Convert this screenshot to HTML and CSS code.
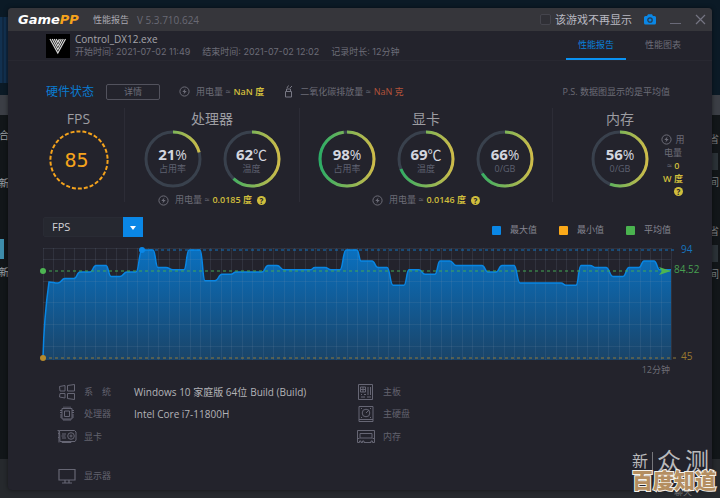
FILE: index.html
```
<!DOCTYPE html>
<html lang="zh-CN">
<head>
    <meta charset="UTF-8">
    <meta name="viewport" content="width=device-width, initial-scale=1.0">
    <title>GamePP 性能报告</title>
    <link rel="stylesheet" href="styles.css">
</head>
<body>
    <!-- shared icons and gradients -->
    <svg class="defs" width="0" height="0" aria-hidden="true">
        <linearGradient id="ring" gradientUnits="userSpaceOnUse" x1="0" y1="0" x2="58" y2="0">
            <stop offset="0" stop-color="#26ad66"/>
            <stop offset="1" stop-color="#d3bc48"/>
        </linearGradient>
        <symbol id="bolt" viewBox="0 0 11 11">
            <circle cx="5.500" cy="5.500" r="4.600" fill="none" stroke="currentColor"/>
            <path d="M6.500 2.500 3.300 6h1.900L4.500 8.600 7.700 5H5.800z" fill="currentColor"/>
        </symbol>
    </svg>

    <div class="desktop" aria-hidden="true">
        <span class="scrap s1">合</span>
        <span class="scrap s2">新</span>
        <span class="scrap s3">新</span>
        <i class="tile"></i>
        <span class="scrap r1">省</span>
        <i class="tile t1"></i>
        <span class="scrap r2">间</span>
        <span class="scrap r3">省</span>
        <i class="tile t2"></i>
        <span class="scrap r4">间</span>
        <span class="chat">聊天</span>
    </div>

    <div class="window">
        <div class="titlebar">
            <span class="logo">Game<b>PP</b></span>
            <span class="name">性能报告</span>
            <span class="version">V 5.3.710.624</span>
            <label class="hide"><input type="checkbox">该游戏不再显示</label>
            <button class="camera" aria-label="截图">
                <svg width="12" height="11" viewBox="0 0 12 11"><path d="M1.500 2H3L4 .3h4L9 2h1.500Q12 2 12 3.500v5.500q0 1.500-1.500 1.500h-9Q0 10.500 0 9V3.500Q0 2 1.500 2z" fill="#0a87e6"/><circle cx="6" cy="6" r="2.200" fill="none" stroke="#253c52" stroke-width="1.300"/></svg>
            </button>
            <button aria-label="最小化"><svg width="11" height="11"><path d="M0 9.500h11" stroke="#6a6a78"/></svg></button>
            <button aria-label="关闭"><svg width="11" height="11"><path d="M1 1l9 9M10 1l-9 9" stroke="#747482" stroke-width="1.200"/></svg></button>
        </div>

        <div class="game">
            <svg class="game-icon" width="24" height="24" viewBox="0 0 24 24">
                <rect width="24" height="24" fill="#000"/>
                <g fill="none" stroke="#d8d8d8" stroke-width="1.200">
                    <path d="M4 5l7.800 14L19.500 5"/>
                    <path d="M6.200 5l5.600 10.500L17.300 5"/>
                    <path d="M8.200 5l3.600 7L15.300 5"/>
                    <path d="M10.200 5l1.600 3.300L13.400 5"/>
                </g>
            </svg>
            <div class="game-info">
                <h1>Control_DX12.exe</h1>
                <p><span>开始时间: 2021-07-02 11:49</span><span>结束时间: 2021-07-02 12:02</span><span>记录时长: 12分钟</span></p>
            </div>
            <nav>
                <a href="#report" class="active">性能报告</a>
                <a href="#charts">性能图表</a>
            </nav>
        </div>

        <div class="status">
            <h2>硬件状态</h2>
            <button class="detail">详情</button>
            <p class="usage"><svg class="bolt"><use href="#bolt"/></svg>用电量 ≈ <b>NaN 度</b></p>
            <p class="carbon"><svg width="9" height="13" viewBox="0 0 9 13" fill="none" stroke="#777783"><path d="M1.500 6.500h6v5.500h-6zM2.500 6.500V4h4v2.500M3 3l1.500-2.500M6 3l2-2"/></svg>二氧化碳排放量 ≈ <b>NaN 克</b></p>
            <p class="ps">P.S. 数据图显示的是平均值</p>
        </div>

        <div class="panels">
            <section>
                <h3>FPS</h3>
                <div class="gauges">
                    <div class="gauge fps">
                        <svg viewBox="0 0 60 60"><circle cx="30" cy="30" r="28.600"/></svg>
                        <strong>85</strong>
                    </div>
                </div>
            </section>
            <section>
                <h3>处理器</h3>
                <div class="gauges">
                    <div class="gauge" data-value="21"><strong>21<small>%</small></strong><span>占用率</span></div>
                    <div class="gauge" data-value="62"><strong>62<small>℃</small></strong><span>温度</span></div>
                </div>
                <p class="usage"><svg class="bolt"><use href="#bolt"/></svg>用电量 ≈ <b>0.0185 度</b><i class="help">?</i></p>
            </section>
            <section>
                <h3>显卡</h3>
                <div class="gauges">
                    <div class="gauge" data-value="98"><strong>98<small>%</small></strong><span>占用率</span></div>
                    <div class="gauge" data-value="69"><strong>69<small>℃</small></strong><span>温度</span></div>
                    <div class="gauge" data-value="66"><strong>66<small>%</small></strong><span>0/GB</span></div>
                </div>
                <p class="usage"><svg class="bolt"><use href="#bolt"/></svg>用电量 ≈ <b>0.0146 度</b><i class="help">?</i></p>
            </section>
            <section>
                <h3>内存</h3>
                <div class="gauges memory">
                    <div class="gauge" data-value="56"><strong>56<small>%</small></strong><span>0/GB</span></div>
                    <p class="side"><svg class="bolt"><use href="#bolt"/></svg>用<br>电量<br>≈ <b>0<br>W 度</b><br><i class="help">?</i></p>
                </div>
            </section>
        </div>

        <div class="chart-bar">
            <div class="picker">
                <select aria-label="图表数据"><option>FPS</option></select>
            </div>
            <ul class="legend">
                <li class="max">最大值</li>
                <li class="min">最小值</li>
                <li class="avg">平均值</li>
            </ul>
        </div>

        <svg class="chart" viewBox="0 0 704 132">
            <defs>
                <linearGradient id="fill" x1="0" y1="0" x2="0" y2="1">
                    <stop offset="0" stop-color="#0a70bf"/>
                    <stop offset="1" stop-color="#1a4468"/>
                </linearGradient>
            </defs>
            <g transform="translate(35 4)">
                <path id="area" fill="url(#fill)"/>
                <path id="grid" fill="none" stroke="#8d9ab5" stroke-opacity=".13"/>
                <path d="M100 2H634" stroke="#0a87e6" stroke-dasharray="3 3" opacity=".8"/>
                <path id="line" fill="none" stroke="#0886e4" stroke-width="1.500"/>
                <path d="M0 23H628" stroke="#43a953" stroke-dasharray="3 3"/>
                <path d="M0 110H634" stroke="#8f7b3c" stroke-dasharray="3 3"/>
                <circle cx="99" cy="2" r="3" fill="#0a87e6"/>
                <circle cx="0" cy="23" r="3" fill="#4db552"/>
                <circle cx="0" cy="110" r="3" fill="#b48a2c"/>
                <path d="M616 19l12 4-12 4 3-4z" fill="#4db552"/>
                <text x="638" y="5" fill="#1673bd">94</text>
                <text x="631" y="25" fill="#479f50">84.52</text>
                <text x="638" y="112" fill="#9a792f">45</text>
                <text class="end" x="627" y="125" fill="#6d6d76" text-anchor="end">12分钟</text>
            </g>
        </svg>

        <dl class="specs">
            <div>
                <svg viewBox="0 0 20 16"><path d="M2.500 2.500 8 1.500V7H3zM10.500 1.500l7-1V7h-7zM3 9.500h5v4.500l-5.500-1zM10.500 9.500h7v6l-7-1z"/></svg>
                <dt>系&emsp;统</dt><dd><span>Windows 10 家庭版 64位</span><span>Build (Build)</span></dd>
            </div>
            <div>
                <svg viewBox="0 0 20 16"><path d="M5 2.500h10v10.500H5zM7.500 5h5v5.500h-5zM7 .5v2M9 .5v2M11 .5v2M13 .5v2M7 13v2M9 13v2M11 13v2M13 13v2M3 4.500h2M3 6.500h2M3 9h2M3 11h2M15 4.500h2M15 6.500h2M15 9h2M15 11h2"/></svg>
                <dt>处理器</dt><dd>Intel Core i7-11800H</dd>
            </div>
            <div>
                <svg viewBox="0 0 20 16"><path d="M.5 1.500H2v12M1 4.500h1M1 8.500h1M2.500 1.500h15l1.500 1.500v8l-1 1.500H3zM5 5h4M4.500 7h4M5 9h4M5 12.500v1h9v-1"/><circle cx="14" cy="7" r="3.300"/><circle cx="14" cy="7" r="1"/></svg>
                <dt>显卡</dt><dd></dd>
            </div>
            <div class="display">
                <svg viewBox="0 0 20 16"><path d="M2 1.500h16v10.500H2zM8 12.500v2M12 12.500v2M5 15h10" stroke-width="1.200"/></svg>
                <dt>显示器</dt><dd></dd>
            </div>
            <div>
                <svg viewBox="0 0 20 16"><path d="M2.500.5h14v15h-14zM4.500 3h5v5h-5zM7 3v5M4.500 5.500h5M12 3v8M14.500 3v8M5 10.500h1M8 10.500h2M5 13h4M11 13h4"/></svg>
                <dt>主板</dt><dd></dd>
            </div>
            <div>
                <svg viewBox="0 0 20 16"><path d="M3 .5h14v15H3zM3 13.500h14M10 7l3-3M5 2.500h1M14 2.500h1M5 11.500h1M14 11.500h1"/><circle cx="10" cy="7" r="3.800"/></svg>
                <dt>主硬盘</dt><dd></dd>
            </div>
            <div>
                <svg viewBox="0 0 20 16"><path d="M1.500 1.500h17v12h-2V12h-1.500v1.500H8V12H6.500v1.500H5V12H3.500v1.500h-2zM4 4.500h12v4.500H4zM1.500 9.500h2M16.500 9.500h2"/></svg>
                <dt>内存</dt><dd></dd>
            </div>
        </dl>
    </div>

    <div class="watermark" aria-hidden="true">
        <div class="crowd"><span>新</span><em>众</em><em>测</em></div>
        <div class="zhidao">百度知道</div>
    </div>

    <script>
        // rings: pathLength 100, so the value is the dash length
        document.querySelectorAll('.gauge[data-value]').forEach(el => {
            el.insertAdjacentHTML('afterbegin',
                '<svg viewBox="0 0 58 58"><circle class="track" cx="29" cy="29" r="27"/>' +
                '<path class="value" pathLength="100" stroke-dasharray="' + el.dataset.value + ' 100" ' +
                'd="M29 2a27 27 0 0 1 0 54a27 27 0 0 1 0-54"/></svg>');
        });

        // [x, fps]
        const data = [[0,45],[6,79.5],[15,79],[22,81],[31,81],[37,84],[47,84],[53,87],[63,87],[68,82],[77,82],
            [84,84],[93,84],[99,94],[110,94],[115,86],[123,86],[130,85],[141,85],[146,94],[157,94],[162,80],[172,80],
            [179,83],[188,83],[193,84],[219,84],[225,87],[234,87],[241,85],[267,85],[272,86],[282,86],[288,85],
            [297,85],[303,94],[314,94],[318,89],[329,89],[335,86],[344,86],[350,78],[361,78],[366,85],[376,85],
            [382,83],[392,83],[397,89],[407,89],[413,87],[439,87],[445,84],[453,84],[459,87],[471,87],[477,79],
            [518,79],[523,78],[533,78],[538,87],[547,87],[553,86],[563,86],[570,82],[580,82],[586,86],[596,86],
            [601,89],[611,89],[617,85],[628,85]];
        const y = fps => 2 + (94 - fps) * 2.2;

        let d = 'M0 ' + y(45);
        for (let i = 1; i < data.length; i++) {
            const [x0, v0] = data[i - 1], [x1, v1] = data[i];
            const mid = (x0 + x1) / 2;
            d += i === 1 ? `Q1 70 ${x1} ${y(v1)}` : `C${mid} ${y(v0)} ${mid} ${y(v1)} ${x1} ${y(v1)}`;
        }
        document.getElementById('line').setAttribute('d', d);
        document.getElementById('area').setAttribute('d', d + 'V112H0z');

        let grid = '';
        for (let i = 0; i <= 60; i++) grid += `M${Math.round(i * 628 / 60) + .5} 0V112`;
        [0, 11, 33, 54, 76, 98].forEach(v => grid += `M0 ${v + .5}H628`);
        document.getElementById('grid').setAttribute('d', grid);
    </script>
</body>
</html>
```
FILE: styles.css
```
* { box-sizing: border-box; }
body { margin: 0; padding: 8px; min-height: 100vh; background: #26292d; font: 9px/12px "Open Sans", "Noto Sans CJK SC", sans-serif; color: #6c6c77; overflow: hidden; }
h1, h2, h3, p, ul, dl, dd { margin: 0; padding: 0; font-weight: normal; }
button { border: 0; padding: 0; background: none; font: inherit; color: inherit; display: flex; align-items: center; justify-content: center; }
a { color: inherit; text-decoration: none; }
b { font-weight: 600; }
.defs { position: absolute; }

/* what shows round the window */
.desktop { position: absolute; inset: 0; z-index: -1; overflow: hidden; background: linear-gradient(#0b1a26 95px, #3b3e45 95px, #3b3e45 115px, #121619 115px, #121619 459px, #26292d 459px); }
.desktop::before { content: ""; position: absolute; left: 0; top: 17px; width: 8px; height: 66px; background: repeating-linear-gradient(90deg, #123150 0 2px, #0f2740 2px 4px); }
.scrap { position: absolute; font-size: 10px; color: #a0a4a8; }
.s1 { left: -1px; top: 129px; }
.s2 { left: -1px; top: 177px; }
.s3 { left: -1px; top: 266px; }
.r1, .r2, .r3, .r4 { right: 1px; color: #7b7f82; }
.r1 { top: 133px; }
.r2 { top: 176px; }
.r3 { top: 225px; }
.r4 { top: 268px; }
.tile { position: absolute; left: 0; top: 239px; width: 4px; height: 20px; background: #3d8dab; }
.t1, .t2 { left: auto; right: 2px; width: 6px; height: 17px; background: #2b3237; }
.t1 { top: 153px; }
.t2 { top: 245px; }
.chat { position: absolute; right: 28px; bottom: 0; color: #777; }

.window { background: #23232c; border-radius: 4px; overflow: hidden; box-shadow: 0 0 4px rgba(0, 0, 0, .5); padding-bottom: 3px; }

.titlebar { display: flex; align-items: center; height: 23px; padding: 0 6px 0 10px; background: #36363b; }
.logo { font: italic bold 13px/23px "DejaVu Sans", sans-serif; color: #fff; margin-right: 14px; }
.logo b { color: #f5a31c; font-weight: bold; }
.name { color: #a9a9b0; margin-right: 8px; }
.version { color: #696974; font-size: 10px; }
.hide { display: flex; align-items: center; gap: 4px; margin-left: auto; font-size: 11px; color: #b9b9c2; }
.hide input { appearance: none; width: 11px; height: 11px; margin: 0; border: 1px solid #45454d; border-radius: 2px; background: #303036; }
.titlebar button { margin-left: 14px; }
.titlebar .camera { margin-left: 12px; }

.game { display: flex; align-items: center; height: 30px; padding: 0 19px 0 38px; border-bottom: 1px solid #282831; }
.game-info { margin-left: 5px; }
.game-info h1 { font-size: 10px; line-height: 12px; color: #a5a5ab; }
.game-info p { display: flex; gap: 12px; font-family: Inter, "Noto Sans CJK SC", sans-serif; line-height: 13px; }
nav { display: flex; gap: 7px; margin-left: auto; align-self: stretch; }
nav a { width: 60px; text-align: center; line-height: 28px; border-bottom: 2px solid transparent; }
nav .active { color: #0a80d8; border-color: #0a92f2; }

.status { display: flex; align-items: center; height: 47px; padding: 14px 42px 0 38px; }
.status h2 { font-size: 12px; color: #0a7bd0; }
.detail { width: 54px; height: 16px; margin: 0 19px 0 12px; border: 1px solid #52525d; border-radius: 2px; }
.usage, .carbon { display: flex; align-items: center; gap: 3px; }
.bolt { width: 11px; height: 11px; margin-right: 3px; }
.usage b, .side b { color: #d0be3c; }
.carbon { margin-left: 20px; }
.carbon svg { margin-right: 4px; }
.carbon b { color: #b4533a; font-weight: normal; }
.ps { margin-left: auto; }
.help { display: inline-block; width: 9px; height: 9px; margin-left: 2px; border-radius: 50%; background: #d0be3c; color: #23232c; font: bold 8px/9px "Open Sans", sans-serif; text-align: center; }

.panels { display: grid; grid-template-columns: 92fr 175fr 253fr 134fr; padding: 0 25px; }
.panels section { height: 94px; border-right: 1px solid #2c2c36; display: flex; flex-direction: column; align-items: center; }
.panels section:last-child { border-right: 0; }
.panels h3 { font-size: 14px; line-height: 22px; color: #9d9da2; }
.gauges { display: flex; justify-content: center; gap: 21px; }
.gauge { position: relative; width: 58px; height: 58px; display: flex; flex-direction: column; align-items: center; padding-top: 16px; }
.gauge svg { position: absolute; inset: 0; }
.gauge circle, .gauge path { fill: none; stroke-width: 3; }
.gauge .track { stroke: #39414d; }
.gauge .value { stroke: url(#ring); }
.gauge strong { font-size: 15px; line-height: 16px; color: #d3d6df; }
.gauge small { font-size: 14px; font-weight: normal; }
.gauge span { color: #5e6170; }
.fps { width: 60px; height: 60px; }
.fps circle { stroke: #f5a31c; stroke-width: 2; stroke-dasharray: 4 2; }
.fps strong { font: 20px/28px "DejaVu Sans Mono", monospace; color: #f5a31c; margin-right: 4px; }
.panels .usage { margin-top: 6px; }
.memory { display: grid; grid-template-columns: 1fr 58px 1fr; gap: 0; width: 100%; }
.memory .gauge { grid-column: 2; }
.side { width: 26px; margin: 3px 0 0 11px; line-height: 13px; text-align: center; white-space: nowrap; }
.side .bolt { vertical-align: -2px; }
.side .help { margin-left: 11px; }

.chart-bar { display: flex; justify-content: space-between; align-items: center; padding: 15px 41px 0 35px; }
.picker { position: relative; width: 100px; height: 20px; }
.picker select { appearance: none; width: 100%; height: 100%; padding: 0 8px; border: 1px solid #292b34; border-radius: 2px; background: #262830; color: #d2d2d6; font: 11px/18px "Open Sans", sans-serif; }
.picker::before { content: ""; position: absolute; right: 0; top: 0; width: 20px; height: 20px; background: #0a87e6; }
.picker::after { content: ""; position: absolute; right: 7px; top: 9px; border: 3px solid transparent; border-top: 4px solid #fff; }
.legend { display: flex; gap: 22px; list-style: none; color: #858590; padding-top: 6px; }
.legend li { display: flex; align-items: center; gap: 9px; }
.legend li::before { content: ""; width: 9px; height: 9px; border-radius: 1px; background: #0a87e6; }
.legend .min::before { background: #fba919; }
.legend .avg::before { background: #4ab34f; }

.chart { display: block; width: 100%; margin-top: 7px; overflow: visible; }
.chart text { font-size: 10px; }
.chart .end { font-size: 9px; }

.specs { display: grid; grid-template-columns: 299fr 356fr; grid-template-rows: 23px 22px 23px 16px 23px; padding: 4px 0 0 49px; }
.specs div { display: flex; align-items: center; grid-column: 1; }
.specs .display { grid-row: 5; }
.specs div:nth-child(n+5) { grid-column: 2; }
.specs div:nth-child(5) { grid-row: 1; }
.specs div:nth-child(6) { grid-row: 2; }
.specs div:nth-child(7) { grid-row: 3; }
.specs svg { width: 20px; height: 16px; margin-right: 7px; fill: none; stroke: #666674; }
.specs dt { width: 50px; color: #62626e; }
.specs dd { display: flex; gap: 3px; color: #b3b3b8; font-size: 10px; }

.watermark { position: absolute; right: 4px; bottom: 8px; }
.crowd { display: flex; align-items: center; gap: 4px; font-size: 24px; line-height: 18px; color: #b9b9bb; }
.crowd em { font-style: normal; }
.crowd span { font-size: 16px; padding-right: 4px; border-right: 1px solid #77777c; }
.zhidao { font-size: 21px; line-height: 20px; font-weight: 900; color: #b48e60; -webkit-text-stroke: 2px #f4f1ea; paint-order: stroke fill; }
```
